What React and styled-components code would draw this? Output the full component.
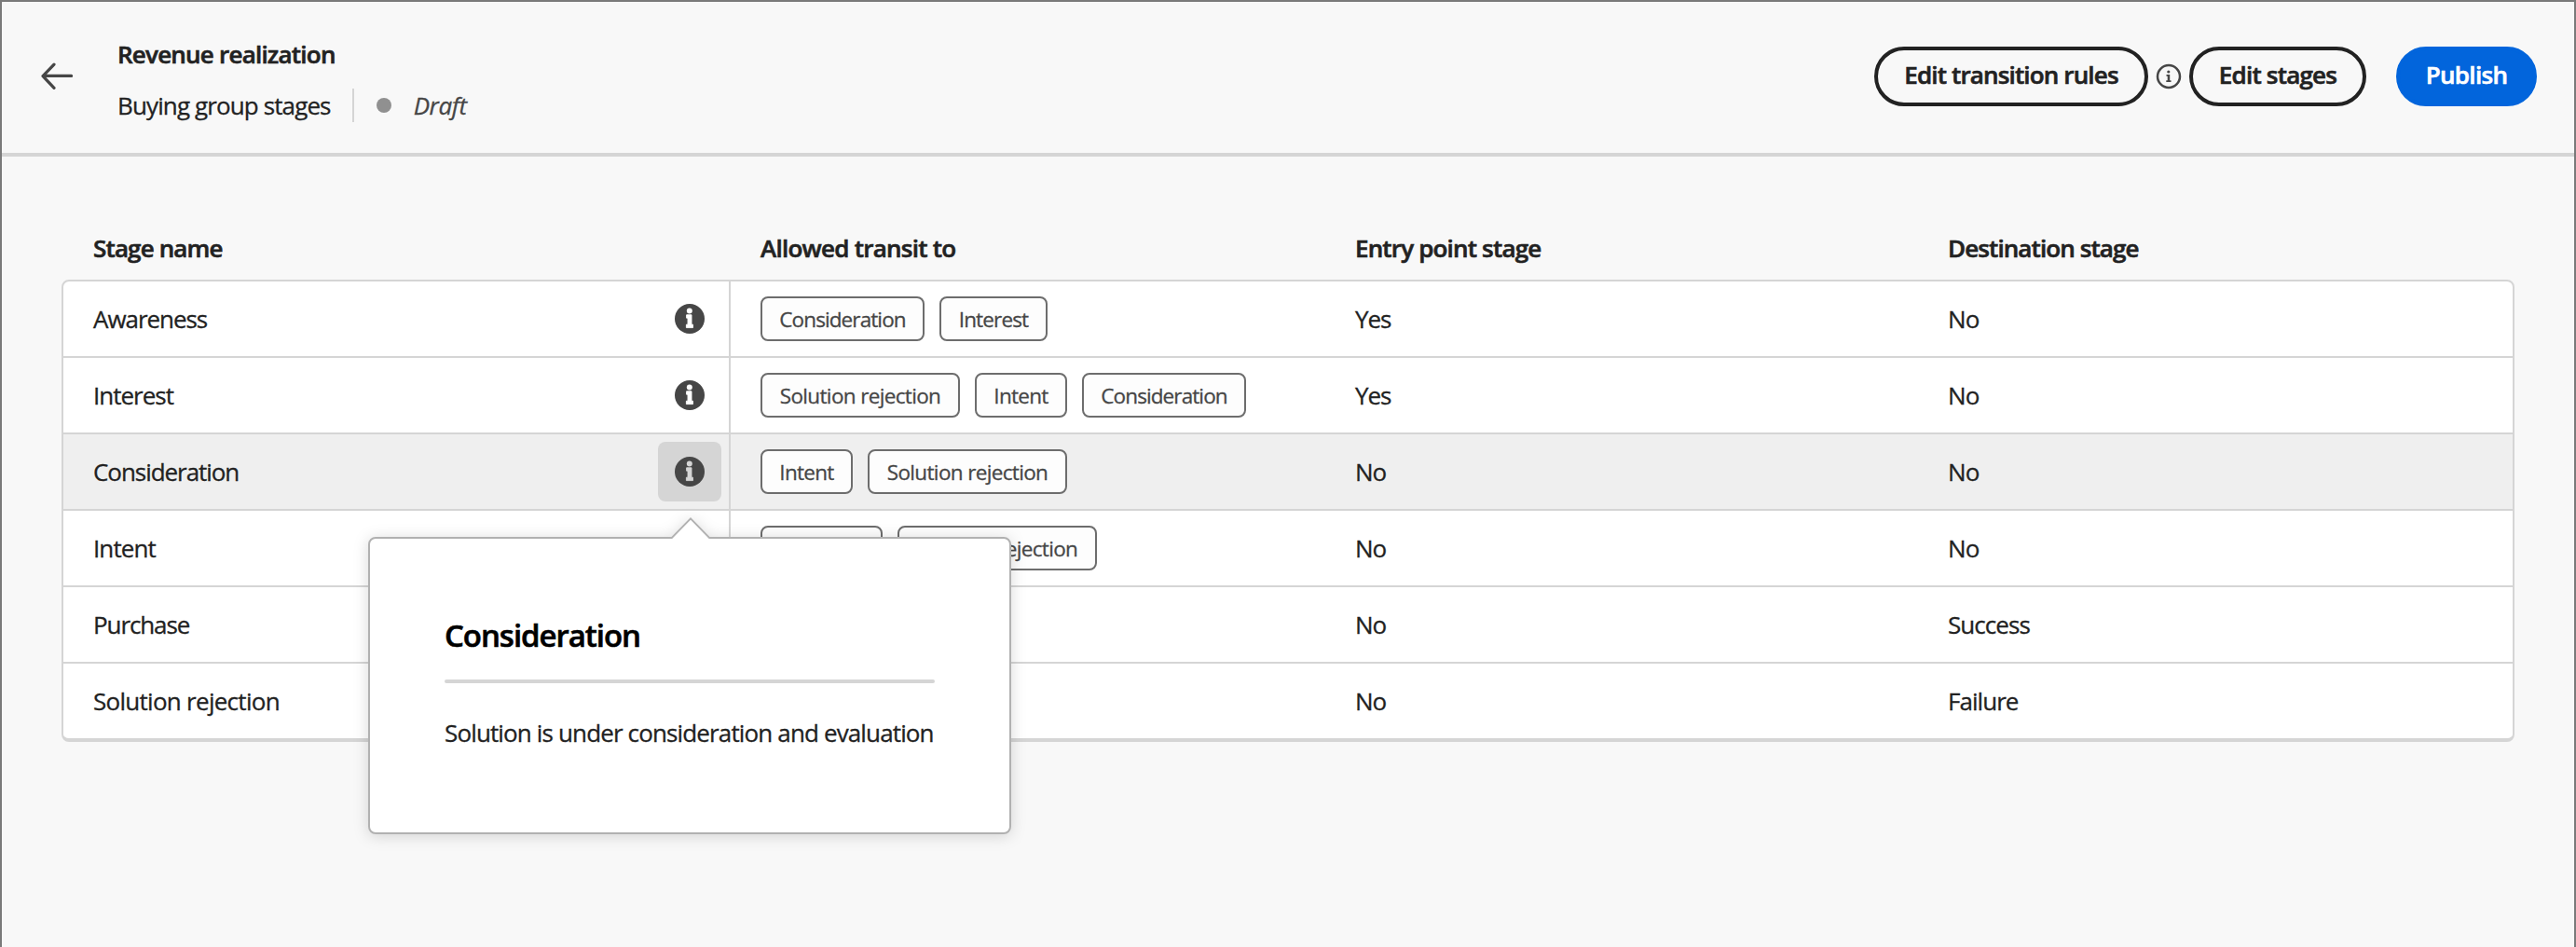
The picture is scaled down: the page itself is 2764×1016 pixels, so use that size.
import React from "react";
import styled, { createGlobalStyle, css } from "styled-components";

const color = {
  page: "#f8f8f8",
  frame: "#7a7a7a",
  line: "#d5d5d5",
  text: "#222222",
  subtle: "#464646",
  chipBorder: "#6d6d6d",
  popoverBorder: "#b1b1b1",
  hover: "#efefef",
  accent: "#0265dc",
};

const GlobalStyle = createGlobalStyle`
  *, *::before, *::after { box-sizing: border-box; }
  body { margin: 0; background: ${color.page}; }
`;

const Page = styled.div`
  height: 1016px;
  border: 2px solid ${color.frame};
  border-bottom: 0;
  background: ${color.page};
  color: ${color.text};
  font-family: "Open Sans", "Noto Sans", sans-serif;
  font-size: 26px;
  line-height: 36px;
  white-space: nowrap;
`;

const Text = styled.span`
  letter-spacing: ${(p) => p.$track ?? -0.8}px;
  font-weight: ${(p) => (p.$strong ? 600 : 400)};
  -webkit-text-stroke: ${(p) => (p.$strong ? 0.6 : 0.3)}px currentColor;
`;

const Header = styled.header`
  display: flex;
  align-items: flex-start;
  height: 166px;
  padding: 0 40px 0 42px;
  border-bottom: 4px solid ${color.line};
`;

const BackButton = styled.button`
  display: flex;
  width: 36px;
  height: 32px;
  margin: 64px 46px 0 0;
  padding: 0;
  border: 0;
  background: none;
`;

const Titles = styled.div`
  display: flex;
  flex-direction: column;
  flex: 1;
  gap: 19px;
  padding-top: 38px;
`;

const SubTitle = styled.div`
  display: flex;
  align-items: center;
`;

const Divider = styled.span`
  width: 2px;
  height: 36px;
  margin: 0 24px 0 23px;
  background: ${color.line};
`;

const StatusDot = styled.span`
  width: 16px;
  height: 16px;
  margin-right: 24px;
  border-radius: 50%;
  background: #909090;
`;

const Status = styled(Text)`
  font-style: italic;
  color: ${color.subtle};
`;

const Actions = styled.div`
  display: flex;
  align-items: center;
  gap: 8px;
  margin-top: 48px;
`;

const Button = styled.button`
  display: flex;
  align-items: center;
  justify-content: center;
  width: ${(p) => p.$width}px;
  height: 64px;
  padding: 0 0 4px;
  border: 4px solid ${color.text};
  border-radius: 32px;
  background: transparent;
  color: ${color.text};
  font: inherit;
  ${(p) =>
    p.$accent &&
    css`
      margin-left: 24px;
      border-color: ${color.accent};
      background: ${color.accent};
      color: #fff;
    `}
`;

const Main = styled.main`
  padding: 63px 64px 0;
`;

const rowGrid = css`
  display: grid;
  grid-template-columns: 716px 638px 636px 1fr;
`;

const TableHead = styled.div`
  ${rowGrid}
  height: 69px;
  padding: 0 2px;
`;

const TableBody = styled.div`
  border: 2px solid ${color.line};
  border-bottom-width: 4px;
  border-radius: 8px;
  background: #fff;
`;

const Row = styled.div`
  ${rowGrid}
  height: 82px;
  border-bottom: 2px solid ${color.line};
  background: ${(p) => (p.$active ? color.hover : "transparent")};
  &:last-child {
    height: 80px;
    border-bottom: 0;
  }
`;

const Cell = styled.div`
  display: flex;
  align-items: center;
  padding-left: 32px;
`;

const NameCell = styled(Cell)`
  justify-content: space-between;
  padding-right: 8px;
  border-right: 2px solid ${color.line};
`;

const ChipCell = styled(Cell)`
  gap: 16px;
`;

const Chip = styled.span`
  display: flex;
  align-items: center;
  justify-content: center;
  width: ${(p) => p.$width}px;
  height: 48px;
  padding-top: 1px;
  border: 2px solid ${color.chipBorder};
  border-radius: 8px;
  background: #fdfdfd;
  color: ${color.subtle};
  font-size: 22.5px;
`;

const InfoSlot = styled.div`
  position: relative;
`;

const InfoButton = styled.button`
  display: flex;
  align-items: center;
  justify-content: center;
  width: 68px;
  height: 64px;
  padding: 0;
  border: 0;
  border-radius: 8px;
  background: ${(p) => (p.$active ? color.line : "transparent")};
  color: ${(p) => (p.$active ? color.line : "#fff")};
`;

const Popover = styled.div`
  position: absolute;
  z-index: 2;
  top: 102px;
  left: -311px;
  width: 690px;
  height: 319px;
  padding: 82px 80px 0;
  border: 2px solid ${color.popoverBorder};
  border-radius: 8px;
  background: #fff;
  filter: drop-shadow(0 2px 8px rgba(0, 0, 0, 0.15));
`;

const PopoverTip = styled.svg`
  position: absolute;
  top: -24px;
  left: 322px;
`;

const PopoverTitle = styled.h2`
  margin: 0;
  padding-bottom: 25px;
  color: #000;
  font-size: 33px;
  line-height: 44px;
`;

const PopoverRule = styled.hr`
  width: 526px;
  height: 4px;
  margin: 0 0 33px;
  border: 0;
  border-radius: 2px;
  background: ${color.line};
`;

const PopoverBody = styled.p`
  margin: 0;
  line-height: 40px;
`;

const BackArrow = () => (
  <svg width="36" height="32" viewBox="0 0 36 32" fill="none" stroke={color.subtle} strokeWidth="3.2" strokeLinecap="round" strokeLinejoin="round">
    <path d="M14 3.1 2 15.6l12 12.8M2.4 15.4h30.2" />
  </svg>
);

const InfoSolid = () => (
  <svg width="32" height="32" viewBox="0 0 32 32">
    <circle cx="16" cy="16" r="16" fill={color.subtle} />
    <circle cx="15.8" cy="7.4" r="3" fill="currentColor" />
    <path d="M12.6 11.8h5.4v10.4h1.5v3.4h-7.1v-3.4H14v-7h-1.4z" fill="currentColor" stroke="currentColor" strokeWidth="0.9" strokeLinejoin="round" />
  </svg>
);

const InfoOutline = () => (
  <svg width="28" height="28" viewBox="0 0 28 28">
    <circle cx="14" cy="14" r="12" fill="none" stroke={color.subtle} strokeWidth="2.5" />
    <circle cx="13.8" cy="9" r="1.6" fill={color.subtle} />
    <path d="M11.5 12h3.7v6.2h1.3v1.7h-5.2v-1.7h1.4v-4.5h-1.2z" fill={color.subtle} />
  </svg>
);

const chips = {
  Consideration: { width: 176, track: -0.9 },
  Interest: { width: 116, track: -0.85 },
  "Solution rejection": { width: 214, track: -0.65 },
  Intent: { width: 99, track: -0.7 },
  Purchase: { width: 131, track: -0.7 },
};

const stages = [
  { name: "Awareness", track: -1.05, info: true, to: ["Consideration", "Interest"], entry: "Yes", dest: "No" },
  { name: "Interest", track: -1, info: true, to: ["Solution rejection", "Intent", "Consideration"], entry: "Yes", dest: "No" },
  { name: "Consideration", track: -1.05, info: true, active: true, to: ["Intent", "Solution rejection"], entry: "No", dest: "No" },
  { name: "Intent", track: -0.9, to: ["Purchase", "Solution rejection"], entry: "No", dest: "No" },
  { name: "Purchase", track: -1.1, to: [], entry: "No", dest: "Success" },
  { name: "Solution rejection", track: -0.72, to: [], entry: "No", dest: "Failure" },
];

const StagePopover = () => (
  <Popover role="dialog">
    <PopoverTip width="44" height="25" viewBox="0 0 44 25">
      <path d="M1.2 24.2 22 2.4l20.8 21.8z" fill="#fff" />
      <path d="M1.2 23.6 22 2.4l20.8 21.2" fill="none" stroke={color.popoverBorder} strokeWidth="2" />
    </PopoverTip>
    <PopoverTitle>
      <Text $strong $track={-1.05}>Consideration</Text>
    </PopoverTitle>
    <PopoverRule />
    <PopoverBody>
      <Text $track={-0.86}>Solution is under consideration and evaluation</Text>
    </PopoverBody>
  </Popover>
);

export default function App() {
  return (
    <>
      <GlobalStyle />
      <Page>
        <Header>
          <BackButton aria-label="Back">
            <BackArrow />
          </BackButton>
          <Titles>
            <Text $strong $track={-0.78}>Revenue realization</Text>
            <SubTitle>
              <Text $track={-0.88}>Buying group stages</Text>
              <Divider />
              <StatusDot />
              <Status $track={-0.4}>Draft</Status>
            </SubTitle>
          </Titles>
          <Actions>
            <Button $width={294}>
              <Text $strong $track={-0.85}>Edit transition rules</Text>
            </Button>
            <InfoOutline />
            <Button $width={190}>
              <Text $strong $track={-0.8}>Edit stages</Text>
            </Button>
            <Button $width={151} $accent>
              <Text $strong $track={-0.7}>Publish</Text>
            </Button>
          </Actions>
        </Header>
        <Main>
          <TableHead>
            <Cell><Text $strong $track={-0.85}>Stage name</Text></Cell>
            <ChipCell><Text $strong $track={-0.75}>Allowed transit to</Text></ChipCell>
            <Cell><Text $strong $track={-0.83}>Entry point stage</Text></Cell>
            <Cell><Text $strong $track={-0.9}>Destination stage</Text></Cell>
          </TableHead>
          <TableBody>
            {stages.map((s) => (
              <Row key={s.name} $active={s.active}>
                <NameCell>
                  <Text $track={s.track}>{s.name}</Text>
                  {s.info && (
                    <InfoSlot>
                      <InfoButton $active={s.active} aria-label={s.name}>
                        <InfoSolid />
                      </InfoButton>
                      {s.active && <StagePopover />}
                    </InfoSlot>
                  )}
                </NameCell>
                <ChipCell>
                  {s.to.map((t) => (
                    <Chip key={t} $width={chips[t].width}>
                      <Text $track={chips[t].track}>{t}</Text>
                    </Chip>
                  ))}
                </ChipCell>
                <Cell><Text $track={-1.1}>{s.entry}</Text></Cell>
                <Cell><Text $track={-0.95}>{s.dest}</Text></Cell>
              </Row>
            ))}
          </TableBody>
        </Main>
      </Page>
    </>
  );
}
